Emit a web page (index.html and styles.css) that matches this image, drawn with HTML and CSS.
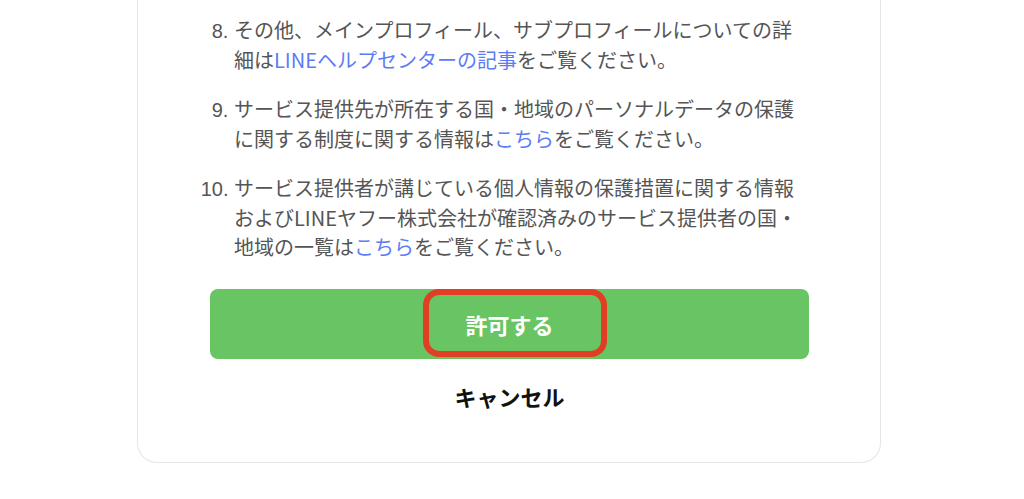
FILE: index.html
```html
<!DOCTYPE html>
<html lang="ja">
<head>
    <meta charset="UTF-8">
    <meta name="viewport" content="width=device-width, initial-scale=1.0">
    <title>許可の確認</title>
    <link rel="stylesheet" href="styles.css">
</head>
<body>
    <div class="card">
        <ol class="notes" start="8">
            <li>その他、メインプロフィール、サブプロフィールについての詳細は<a href="#">LINEヘルプセンターの記事</a>をご覧ください。</li>
            <li>サービス提供先が所在する国・地域のパーソナルデータの保護に関する制度に関する情報は<a href="#">こちら</a>をご覧ください。</li>
            <li>サービス提供者が講じている個人情報の保護措置に関する情報およびLINEヤフー株式会社が確認済みのサービス提供者の国・地域の一覧は<a href="#">こちら</a>をご覧ください。</li>
        </ol>

        <div class="allow-wrap">
            <button type="button" class="allow-button">許可する</button>
            <span class="highlight"></span>
        </div>

        <button type="button" class="cancel-button">キャンセル</button>
    </div>
</body>
</html>
```

FILE: styles.css
```css
body {
    font-family: "Noto Sans CJK JP", "Noto Sans", sans-serif;
    background-color: #fff;
    margin: 0;
    padding: 0;
}
.card {
    display: flow-root;
    width: 744px;
    box-sizing: border-box;
    margin: -5px 0 0 137px;
    padding: 0 71px 44px 72px;
    border: 1px solid #e6e6e6;
    border-top: none;
    border-radius: 0 0 20px 20px;
    background: #fff;
}
.notes {
    margin: 0;
    padding: 0 0 0 24px;
    color: #555;
    font-size: 20px;
    line-height: 29.5px;
}
.notes li {
    margin-top: 20px;
}
.notes li::marker {
    font-family: "Liberation Sans", sans-serif;
}
.notes a {
    color: #5b7cf6;
    text-decoration: none;
}
.allow-wrap {
    position: relative;
    margin-top: 27px;
}
.allow-button {
    display: block;
    width: 100%;
    height: 70px;
    background-color: #69c563;
    color: #fff;
    border: none;
    border-radius: 8px;
    font-family: inherit;
    font-size: 22px;
    font-weight: bold;
    cursor: pointer;
}
.highlight {
    position: absolute;
    left: 213px;
    top: 0;
    width: 184px;
    height: 68px;
    box-sizing: border-box;
    border: 6px solid #e03f24;
    border-radius: 16px;
    pointer-events: none;
}
.cancel-button {
    display: block;
    margin: 15px auto 0;
    padding: 6px 10px;
    background: none;
    border: none;
    color: #111;
    font-family: inherit;
    font-size: 22px;
    font-weight: bold;
    cursor: pointer;
}
```
